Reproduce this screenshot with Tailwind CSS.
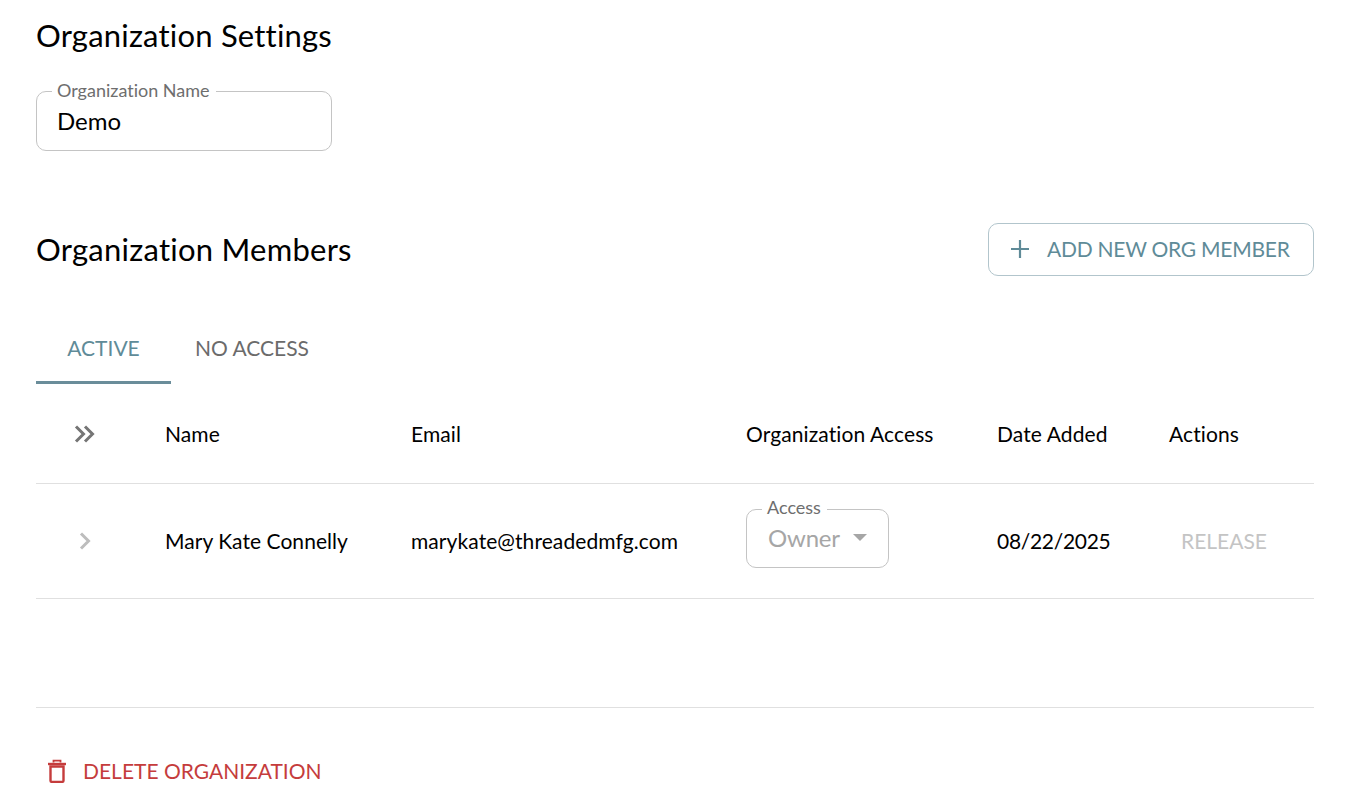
<!DOCTYPE html>
<html lang="en">
<head>
  <meta charset="UTF-8">
  <title>Organization Settings</title>
  <script src="https://cdn.jsdelivr.net/npm/@tailwindcss/browser@4"></script>
</head>
<body class="bg-white font-['Lato',sans-serif] [font-variant-ligatures:none] text-black h-[804px] overflow-hidden">
  <div class="px-[36px] flex flex-col">
    <!-- Settings -->
    <h1 class="text-[31px] leading-[36px] mt-[17px] tracking-[0.2px]">Organization Settings</h1>
    <div class="relative mt-[38px] w-[296px] h-[60px] border border-[#c4c4c4] rounded-[10px] flex items-center pl-[20px] text-[24px]">
      Demo
      <span class="absolute left-[15px] top-[-12px] bg-white pl-[5px] pr-[6px] text-[18px] leading-[20px] text-[#6e6e6e]">Organization Name</span>
    </div>

    <!-- Members -->
    <div class="flex items-center justify-between mt-[72px] h-[53px]">
      <h2 class="text-[31px] leading-[36px] tracking-[0.25px] pb-[2px]">Organization Members</h2>
      <button class="w-[326px] h-[53px] border border-[#b2c5cc] rounded-[10px] flex items-center pl-[20px] pb-[1px] text-[#5f8b98] text-[21px] tracking-[-0.25px]">
        <svg class="w-[22px] h-[22px] mr-[16px]" viewBox="0 0 22 22" fill="none" stroke="#5f8b98" stroke-width="2.2"><path d="M11 2v18M2 11h18"/></svg>
        ADD NEW ORG MEMBER
      </button>
    </div>

    <!-- Tabs -->
    <div class="flex mt-[47px] h-[61px] text-[21px]">
      <div class="w-[135px] flex items-center justify-center border-b-[3px] border-[#6a8d9a] text-[#5f8b98] pb-[8px]">ACTIVE</div>
      <div class="w-[162px] flex items-center justify-center border-b-[3px] border-transparent text-[#6b6b6b] pb-[8px]">NO ACCESS</div>
    </div>

    <!-- Table -->
    <table class="w-[1278px] table-fixed text-[21px]">
      <thead>
        <tr class="h-[99px] border-b border-[#e0e0e0] tracking-[0.1px]">
          <th class="w-[129px] font-normal">
            <svg class="mx-auto translate-x-[-16px] translate-y-[1px] w-[24px] h-[20px]" viewBox="0 0 24 20" fill="none" stroke="#757575" stroke-width="3"><path d="M3 2.500l7.500 7.500L3 17.500M12 2.500l7.500 7.500L12 17.500"/></svg>
          </th>
          <th class="w-[246px] font-normal text-left">Name</th>
          <th class="w-[335px] font-normal text-left">Email</th>
          <th class="w-[251px] font-normal text-left">Organization Access</th>
          <th class="w-[172px] font-normal text-left">Date Added</th>
          <th class="font-normal text-left">Actions</th>
        </tr>
      </thead>
      <tbody>
        <tr class="h-[115px] border-b border-[#e0e0e0]">
          <td>
            <svg class="mx-auto translate-x-[-16px] w-[14px] h-[20px]" viewBox="0 0 14 20" fill="none" stroke="#bdbdbd" stroke-width="3"><path d="M3 2.500l7.500 7.500L3 17.500"/></svg>
          </td>
          <td class="tracking-[0.05px]">Mary Kate Connelly</td>
          <td class="tracking-[0.08px]">marykate@threadedmfg.com</td>
          <td>
            <div class="relative w-[143px] h-[59px] mb-[4px] pb-[2px] border border-[#c4c4c4] rounded-[10px] flex items-center pl-[21px] text-[24px] text-[#a6a6a6] tracking-[-0.2px]">
              Owner
              <svg class="ml-[13px] w-[14px] h-[7px]" viewBox="0 0 14 7" fill="#a6a6a6"><path d="M0 0h14L7 7z"/></svg>
              <span class="absolute left-[15px] top-[-13px] bg-white pl-[5px] pr-[6px] text-[18px] leading-[20px] text-[#6e6e6e] tracking-normal">Access</span>
            </div>
          </td>
          <td class="tracking-[-0.3px]">08/22/2025</td>
          <td class="pl-[12px] text-[#c4c4c4]">RELEASE</td>
        </tr>
      </tbody>
    </table>

    <!-- Danger zone -->
    <div class="mt-[108px] border-t border-[#e0e0e0] pt-[47px] flex items-center text-[21px] text-[#c53c3c] leading-[32px]">
      <svg class="ml-[11px] mr-[16px] w-[20px] h-[24px]" viewBox="0 0 20 24" fill="none" stroke="#c53c3c"><path d="M1 5h18" stroke-width="2.400"/><path d="M6.500 3.500V1.600h7v1.900" stroke-width="1.800"/><path d="M3.500 7.500h13v14a1.400 1.400 0 0 1-1.400 1.400H4.900a1.400 1.400 0 0 1-1.400-1.400z" stroke-width="2.400"/></svg>
      DELETE ORGANIZATION
    </div>
  </div>
</body>
</html>
